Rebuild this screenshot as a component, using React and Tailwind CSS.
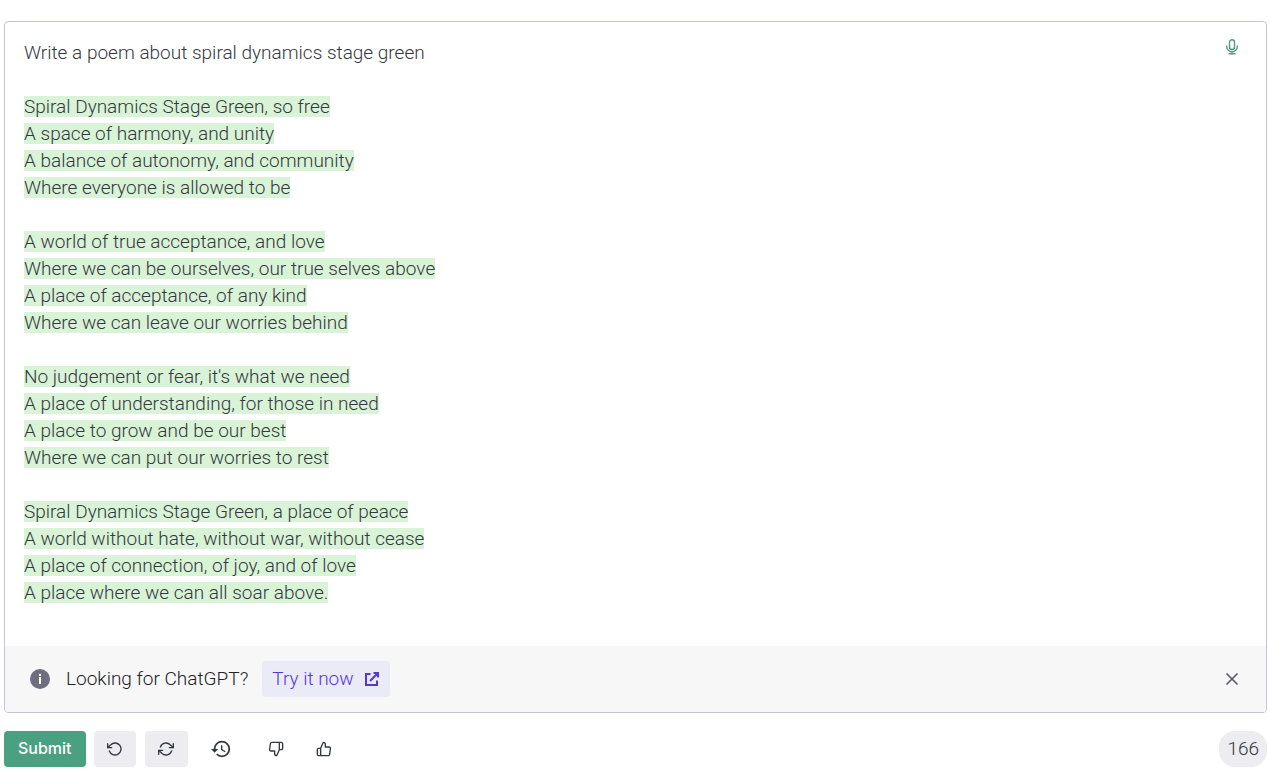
import React, { useState } from 'react'
import { FiX, FiRotateCcw, FiRefreshCw, FiThumbsDown, FiThumbsUp } from 'react-icons/fi'
import { MdHistory } from 'react-icons/md'

const prompt = 'Write a poem about spiral dynamics stage green'

const stanzas = [
  [
    'Spiral Dynamics Stage Green, so free',
    'A space of harmony, and unity',
    'A balance of autonomy, and community',
    'Where everyone is allowed to be'
  ],
  [
    'A world of true acceptance, and love',
    'Where we can be ourselves, our true selves above',
    'A place of acceptance, of any kind',
    'Where we can leave our worries behind'
  ],
  [
    "No judgement or fear, it's what we need",
    'A place of understanding, for those in need',
    'A place to grow and be our best',
    'Where we can put our worries to rest'
  ],
  [
    'Spiral Dynamics Stage Green, a place of peace',
    'A world without hate, without war, without cease',
    'A place of connection, of joy, and of love',
    'A place where we can all soar above.'
  ]
]

const InfoIcon = () => (
  <svg viewBox="0 0 20 20" className="h-5 w-5 shrink-0" aria-hidden="true">
    <circle cx="10" cy="10" r="10" fill="#6e6e80" />
    <path d="M9 5h2v2H9zM9 8h2v7H9z" fill="#fff" />
  </svg>
)

const MicIcon = () => (
  <svg viewBox="0 0 16 16" className="h-4 w-4" fill="none" stroke="currentColor" strokeWidth="1.4" aria-hidden="true">
    <rect x="5.5" y="0.7" width="5" height="9.8" rx="2.5" />
    <path d="M2.7 6.5v1.2a5.3 5 0 0 0 10.6 0V6.5M8 12.7v2M4.5 14.7h7" />
  </svg>
)

const ExternalIcon = () => (
  <svg viewBox="0 0 16 16" className="h-4 w-4" fill="none" stroke="currentColor" strokeWidth="2" aria-hidden="true">
    <path d="M6.5 3H2v11h11V9.5M9.5 2H14v4.5M14 2L6 10" />
  </svg>
)

const Editor = () => (
  <div className="flex items-start justify-between pt-[17px] pb-10 pl-[19px] pr-6">
    <div
      role="textbox"
      aria-multiline="true"
      aria-label="Prompt"
      contentEditable
      suppressContentEditableWarning
      spellCheck={false}
      className="min-w-0 flex-1 space-y-[27px] leading-[27px] text-[#353740] outline-none"
    >
      <p>{prompt}</p>
      {stanzas.map((lines) => (
        <div key={lines[0]}>
          {lines.map((line) => (
            <p key={line} className="py-[3px] leading-[21px]">
              <span className="inline-block bg-[#d8f3d6] align-top">{line}</span>
            </p>
          ))}
        </div>
      ))}
    </div>
    <button type="button" aria-label="Record" className="px-0.5 text-[#4aa181]">
      <MicIcon />
    </button>
  </div>
)

const Banner = ({ onClose }) => (
  <div className="flex items-center bg-[#f7f7f8] py-[15px] pl-[25px] pr-6">
    <InfoIcon />
    <span className="ml-4 text-[#202123]">Looking for ChatGPT?</span>
    <a
      href="#chat"
      className="ml-3.5 flex h-9 items-center gap-2.5 rounded-sm bg-[#ebebf8] px-2.5 text-[#5436da]"
    >
      Try it now
      <ExternalIcon />
    </a>
    <button type="button" aria-label="Close" onClick={onClose} className="ml-auto text-[#565869]">
      <FiX className="h-5 w-5" />
    </button>
  </div>
)

const App = () => {
  const [showBanner, setShowBanner] = useState(true)

  return (
    <main className="bg-white pt-[21px] pr-0.5 pb-3 pl-1 font-[Roboto,sans-serif] text-[19px] font-light text-[#353740]">
      <section className="overflow-hidden rounded-sm border border-[#c5c5d2]">
        <Editor />
        {showBanner && <Banner onClose={() => setShowBanner(false)} />}
      </section>

      <div className="mt-[18px] flex items-center">
        <button type="submit" className="h-9 rounded-sm bg-[#4aa181] px-3.5 pb-0.5 font-[Inter,sans-serif] text-base font-medium text-white">
          Submit
        </button>
        <button type="button" aria-label="Undo" className="ml-2 flex h-9 w-[42px] items-center justify-center rounded-sm bg-[#ececf1]">
          <FiRotateCcw className="h-4 w-4" />
        </button>
        <button type="button" aria-label="Regenerate" className="ml-[9px] flex h-9 w-[43px] items-center justify-center rounded-sm bg-[#ececf1]">
          <FiRefreshCw className="h-4 w-4" />
        </button>
        <button type="button" aria-label="History" className="ml-[22px]">
          <MdHistory className="h-[22px] w-[22px]" />
        </button>
        <div className="ml-9 flex gap-8">
          <button type="button" aria-label="Thumbs down">
            <FiThumbsDown className="h-4 w-4" />
          </button>
          <button type="button" aria-label="Thumbs up">
            <FiThumbsUp className="h-4 w-4" />
          </button>
        </div>
        <span className="ml-auto flex h-9 items-center rounded-2xl bg-[#ececf1] px-2 text-[#353740]">
          166
        </span>
      </div>
    </main>
  )
}

export default App
